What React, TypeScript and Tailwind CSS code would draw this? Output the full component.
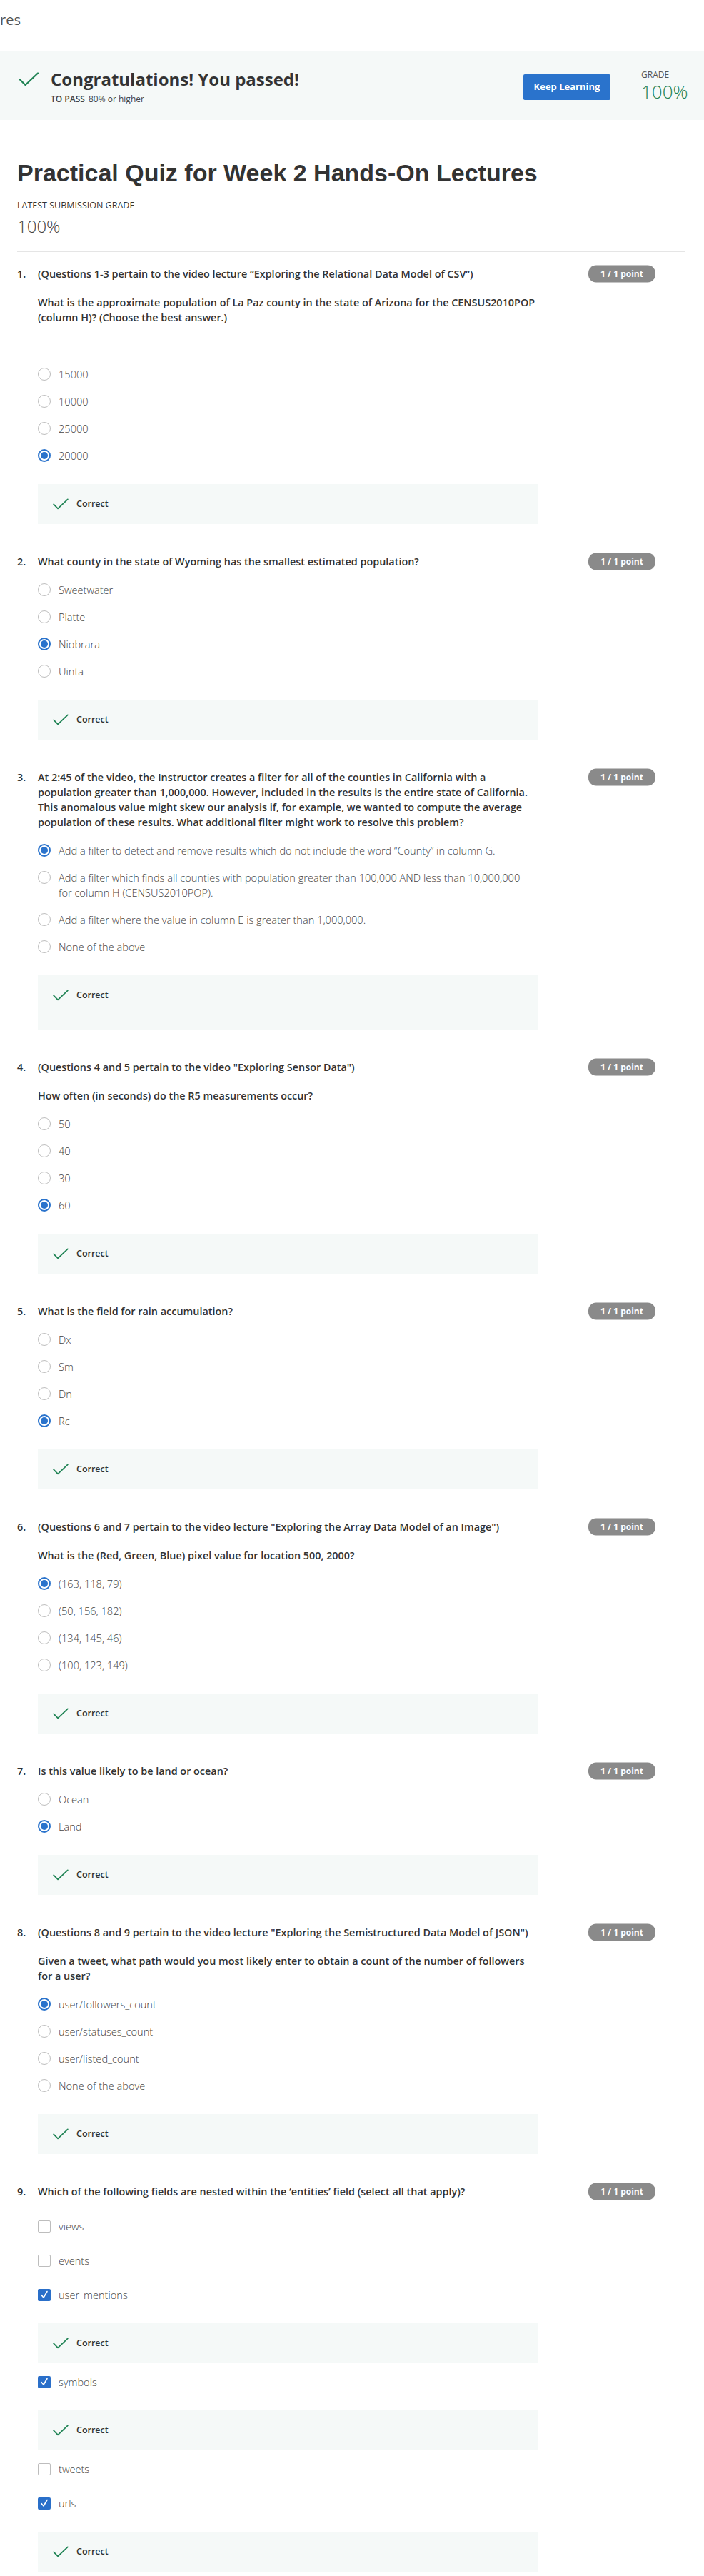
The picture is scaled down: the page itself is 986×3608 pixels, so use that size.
import React from 'react';

type Question = {
  n: number;
  header: string;
  text?: string;
  options: string[];
  selected: number;
  gap?: boolean;
  tallBox?: boolean;
};

const questions: Question[] = [
  {
    n: 1,
    header: '(Questions 1-3 pertain to the video lecture “Exploring the Relational Data Model of CSV”)',
    text: 'What is the approximate population of La Paz county in the state of Arizona for the CENSUS2010POP (column H)? (Choose the best answer.)',
    options: ['15000', '10000', '25000', '20000'],
    selected: 3,
    gap: true,
  },
  {
    n: 2,
    header: 'What county in the state of Wyoming has the smallest estimated population?',
    options: ['Sweetwater', 'Platte', 'Niobrara', 'Uinta'],
    selected: 2,
  },
  {
    n: 3,
    header:
      'At 2:45 of the video, the Instructor creates a filter for all of the counties in California with a population greater than 1,000,000. However, included in the results is the entire state of California. This anomalous value might skew our analysis if, for example, we wanted to compute the average population of these results. What additional filter might work to resolve this problem?',
    options: [
      'Add a filter to detect and remove results which do not include the word “County” in column G.',
      'Add a filter which finds all counties with population greater than 100,000 AND less than 10,000,000 for column H (CENSUS2010POP).',
      'Add a filter where the value in column E is greater than 1,000,000.',
      'None of the above',
    ],
    selected: 0,
    tallBox: true,
  },
  {
    n: 4,
    header: '(Questions 4 and 5 pertain to the video "Exploring Sensor Data")',
    text: 'How often (in seconds) do the R5 measurements occur?',
    options: ['50', '40', '30', '60'],
    selected: 3,
  },
  {
    n: 5,
    header: 'What is the field for rain accumulation?',
    options: ['Dx', 'Sm', 'Dn', 'Rc'],
    selected: 3,
  },
  {
    n: 6,
    header: '(Questions 6 and 7 pertain to the video lecture "Exploring the Array Data Model of an Image")',
    text: 'What is the (Red, Green, Blue) pixel value for location 500, 2000?',
    options: ['(163, 118, 79)', '(50, 156, 182)', '(134, 145, 46)', '(100, 123, 149)'],
    selected: 0,
  },
  {
    n: 7,
    header: 'Is this value likely to be land or ocean?',
    options: ['Ocean', 'Land'],
    selected: 1,
  },
  {
    n: 8,
    header: '(Questions 8 and 9 pertain to the video lecture "Exploring the Semistructured Data Model of JSON")',
    text: 'Given a tweet, what path would you most likely enter to obtain a count of the number of followers for a user?',
    options: ['user/followers_count', 'user/statuses_count', 'user/listed_count', 'None of the above'],
    selected: 0,
  },
];

const Check: React.FC<{ className?: string }> = ({ className }) => (
  <svg viewBox="0 0 28 20" className={className} fill="none">
    <polyline points="1.5,10.5 9,18 26.5,1.5" stroke="#1f8354" strokeWidth="2.2" strokeLinecap="round" strokeLinejoin="round" />
  </svg>
);

const Radio: React.FC<{ on: boolean }> = ({ on }) =>
  on ? (
    <span className="mt-[1.5px] flex h-[18px] w-[18px] shrink-0 items-center justify-center rounded-full border-2 border-[#2a73cc]">
      <span className="h-[10px] w-[10px] rounded-full bg-[#2a73cc]" />
    </span>
  ) : (
    <span className="mt-[1.5px] h-[18px] w-[18px] shrink-0 rounded-full border-[1.5px] border-[#bdbdbd]" />
  );

const CheckBox: React.FC<{ on: boolean }> = ({ on }) =>
  on ? (
    <span className="flex h-[17px] w-[18px] shrink-0 items-center justify-center rounded-[2px] bg-[#2a6fc9]">
      <svg viewBox="0 0 12 12" className="h-[12px] w-[12px]" fill="none">
        <polyline points="2,6.5 5,10 10,1.5" stroke="#fff" strokeWidth="1.6" strokeLinecap="round" strokeLinejoin="round" />
      </svg>
    </span>
  ) : (
    <span className="h-[17px] w-[18px] shrink-0 rounded-[2px] border-[1.5px] border-[#bdbdbd]" />
  );

const Correct: React.FC<{ tall?: boolean; className?: string }> = ({ tall, className }) => (
  <div className={`${tall ? 'h-[76px]' : 'h-[56px]'} ${className ?? ''} w-[700px] bg-[#f5f9f8] px-[21px] pt-[18px]`}>
    <div className="flex h-[20px] items-center">
      <Check className="h-[16px] w-[22px]" />
      <span className="ml-[11px] text-[12.5px] font-semibold text-[#333]">Correct</span>
    </div>
  </div>
);

const Badge = () => (
  <div className="ml-[66px] flex h-[24px] w-[94px] shrink-0 -translate-y-[1.5px] items-center justify-center rounded-[11px] bg-[#8a8a8a] text-[12px] font-bold text-white">
    1 / 1 point
  </div>
);

const headCls = 'text-[14.4px] font-semibold leading-[21px] text-[#333]';
const optCls = 'ml-[11px] max-w-[650px] text-[14.6px] font-light leading-[21px] text-[#444]';

const QuestionBlock: React.FC<{ q: Question }> = ({ q }) => (
  <div className="mt-[42px] flex first:mt-[20px]">
    <div className={`w-[29px] shrink-0 ${headCls}`}>{q.n}.</div>
    <div className="w-[705px] shrink-0">
      <div className={headCls}>{q.header}</div>
      {q.text && <div className={`mt-[19px] ${headCls}`}>{q.text}</div>}
      <div className={q.gap ? 'mt-[50px]' : 'mt-[10px]'}>
        {q.options.map((o, i) => (
          <div key={o} className="flex items-start py-[8.5px]">
            <Radio on={i === q.selected} />
            <span className={optCls}>{o}</span>
          </div>
        ))}
      </div>
      <Correct tall={q.tallBox} className="mt-[21px]" />
    </div>
    <Badge />
  </div>
);

const boxes: { label: string; on: boolean }[] = [
  { label: 'views', on: false },
  { label: 'events', on: false },
  { label: 'user_mentions', on: true },
  { label: 'symbols', on: true },
  { label: 'tweets', on: false },
  { label: 'urls', on: true },
];

export default function App() {
  return (
    <div className="min-h-[3608px] bg-white font-['Open_Sans',sans-serif] text-[#333]">
      <div className="h-[72px] border-b border-[#cfcfcf] pt-[14px] text-[20px] leading-[28px] text-[#555]">res</div>

      <div className="flex h-[96px] items-center bg-[#f5f9f8]">
        <div className="flex flex-1 items-start pl-[26px] pt-[3px]">
          <Check className="mt-[5px] h-[20px] w-[29px]" />
          <div className="ml-[16px]">
            <div className="text-[24px] font-bold leading-[30px] text-[#333]">Congratulations! You passed!</div>
            <div className="mt-[5px] text-[12px] leading-[16px] text-[#444]">
              <span className="font-semibold">TO PASS</span> <span className="ml-[2px]">80% or higher</span>
            </div>
          </div>
        </div>
        <button className="mt-[4px] h-[36px] w-[122px] rounded-[2px] bg-[#2a73cc] text-[13px] font-bold text-white">
          Keep Learning
        </button>
        <div className="ml-[24px] h-[68px] w-px bg-[#e3e3e3]" />
        <div className="ml-[18px] mr-[27px] w-[61px]">
          <div className="text-[12px] leading-[16px] text-[#555]">GRADE</div>
          <div className="text-[26px] font-light leading-[30px] text-[#1f8354]">100%</div>
        </div>
      </div>

      <div className="px-6">
        <h1 className="mt-[54px] font-['Liberation_Sans',Arial,sans-serif] text-[34px] font-bold leading-[40px] text-[#333]">
          Practical Quiz for Week 2 Hands-On Lectures
        </h1>
        <div className="mt-[18px] text-[12.5px] leading-[16px] text-[#333]">LATEST SUBMISSION GRADE</div>
        <div className="mt-[5px] text-[24px] font-light leading-[32px] text-[#444]">100%</div>
        <div className="mt-[19px] h-px w-[935px] bg-[#e5e5e5]" />

        <div>
          {questions.map((q) => (
            <QuestionBlock key={q.n} q={q} />
          ))}

          <div className="mt-[42px] flex">
            <div className={`w-[29px] shrink-0 ${headCls}`}>9.</div>
            <div className="w-[705px] shrink-0">
              <div className={headCls}>
                Which of the following fields are nested within the ‘entities’ field (select all that apply)?
              </div>
              <div className="mt-[14px]">
                {boxes.map((b) => (
                  <div key={b.label}>
                    <div className="flex h-[48px] items-center">
                      <CheckBox on={b.on} />
                      <span className={optCls}>{b.label}</span>
                    </div>
                    {b.on && <Correct className="mb-[2px] mt-[16px]" />}
                  </div>
                ))}
              </div>
            </div>
            <Badge />
          </div>
        </div>
      </div>
    </div>
  );
}
